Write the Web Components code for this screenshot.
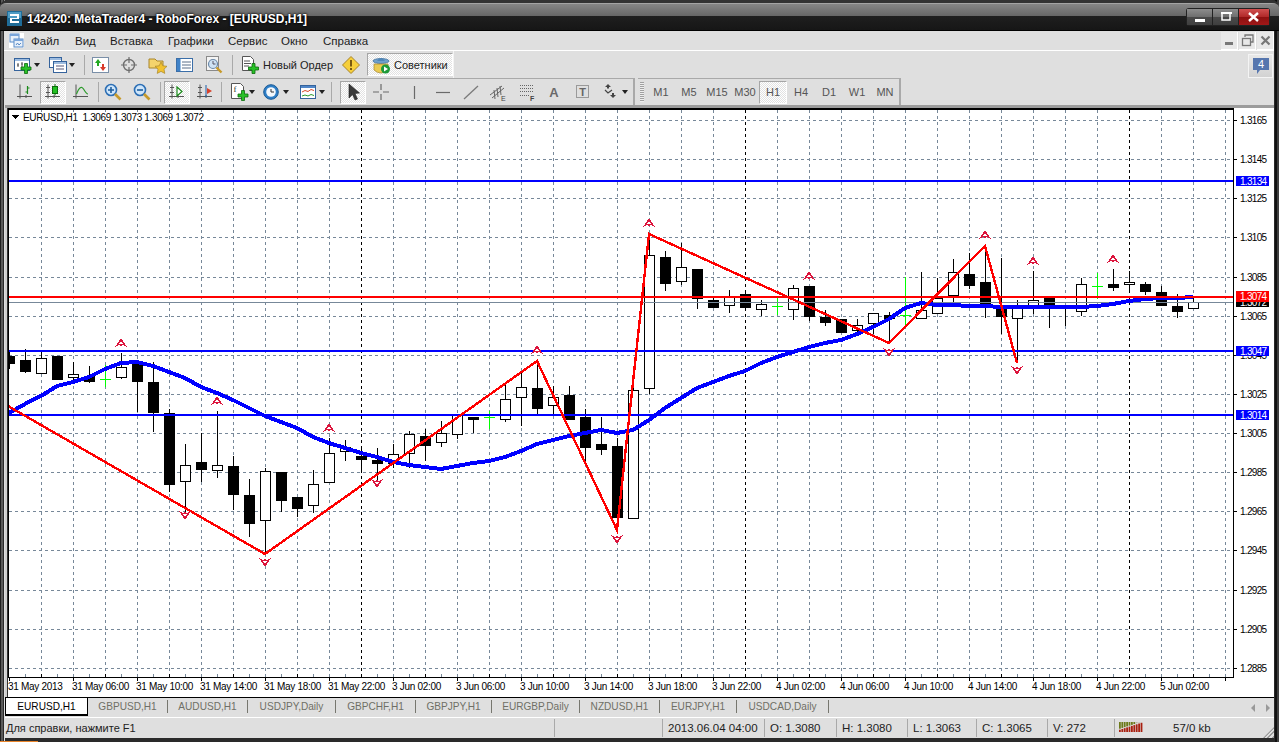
<!DOCTYPE html>
<html>
<head>
<meta charset="utf-8">
<title>MetaTrader4</title>
<style>
  html, body { margin: 0; padding: 0; background: #2a2a2a; overflow: hidden; }
</style>
</head>
<body>
<mt-window>
  <mt-titlebar title-text="142420: MetaTrader4 - RoboForex - [EURUSD,H1]"></mt-titlebar>
  <mt-menubar></mt-menubar>
  <mt-toolrow>
    <mt-toolbar edge="light">
      <tb-btn w="36" pad="6" icon="newchart" caret gap="2"></tb-btn>
      <tb-btn w="36" pad="5" icon="profiles" caret gap="2"></tb-btn>
      <tb-sep w="8"></tb-sep>
      <tb-btn w="26" icon="market"></tb-btn>
      <tb-btn w="30" icon="target"></tb-btn>
      <tb-btn w="28" icon="navigator"></tb-btn>
      <tb-btn w="26" icon="terminal"></tb-btn>
      <tb-btn w="32" icon="tester"></tb-btn>
      <tb-sep w="4"></tb-sep>
      <tb-btn w="106" pad="7" icon="order" gap="4">Новый Ордер</tb-btn>
      <tb-btn w="22" icon="alert"></tb-btn>
      <tb-btn w="5"></tb-btn>
      <tb-btn w="86" pad="4" icon="experts" gap="4" pressed>Советники</tb-btn>
    </mt-toolbar>
    <mt-notify count="4"></mt-notify>
  </mt-toolrow>
  <mt-toolrow>
    <mt-toolbar edge="gray" line>
      <tb-btn w="4"></tb-btn>
      <tb-btn w="26" icon="bars"></tb-btn>
      <tb-btn w="2"></tb-btn>
      <tb-btn w="26" icon="candles" pressed></tb-btn>
      <tb-btn w="2"></tb-btn>
      <tb-btn w="26" icon="linechart"></tb-btn>
      <tb-sep w="8"></tb-sep>
      <tb-btn w="22" icon="zoomin"></tb-btn>
      <tb-btn w="36" icon="zoomout"></tb-btn>
      <tb-sep w="1"></tb-sep>
      <tb-btn w="3"></tb-btn>
      <tb-btn w="26" icon="autoscroll" pressed></tb-btn>
      <tb-btn w="2"></tb-btn>
      <tb-btn w="26" icon="shift"></tb-btn>
      <tb-sep w="6"></tb-sep>
      <tb-btn w="38" pad="7" icon="indicators" caret gap="0"></tb-btn>
      <tb-btn w="30" pad="1" icon="clock" caret gap="2"></tb-btn>
      <tb-btn w="36" pad="8" icon="templates" caret gap="1"></tb-btn>
      <tb-sep w="6"></tb-sep>
      <tb-btn w="6"></tb-btn>
      <tb-btn w="26" icon="cursor" pressed></tb-btn>
      <tb-btn w="30" icon="cross"></tb-btn>
      <tb-btn w="36" icon="vline"></tb-btn>
      <tb-btn w="22" icon="hline"></tb-btn>
      <tb-btn w="34" icon="trend"></tb-btn>
      <tb-btn w="20" icon="channel"></tb-btn>
      <tb-btn w="38" icon="fibo"></tb-btn>
      <tb-btn w="16" icon="textA"></tb-btn>
      <tb-btn w="42" icon="label"></tb-btn>
      <tb-btn w="29" pad="0" icon="arrows" caret gap="0"></tb-btn>
    </mt-toolbar>
    <mt-toolbar edge="gray" line grip gapleft>
      <tb-btn w="28" period>M1</tb-btn>
      <tb-btn w="28" period>M5</tb-btn>
      <tb-btn w="28" period>M15</tb-btn>
      <tb-btn w="28" period>M30</tb-btn>
      <tb-btn w="28" period pressed>H1</tb-btn>
      <tb-btn w="28" period>H4</tb-btn>
      <tb-btn w="28" period>D1</tb-btn>
      <tb-btn w="28" period>W1</tb-btn>
      <tb-btn w="28" period>MN</tb-btn>
    </mt-toolbar>
  </mt-toolrow>
  <mt-chart></mt-chart>
  <mt-tabs></mt-tabs>
  <mt-statusbar></mt-statusbar>
</mt-window>

<script>
const UI_FONT = '"Liberation Sans", "DejaVu Sans", sans-serif';

// small pieces shared by the toolbar icons
const plus = (x, y) => `<path d="M${x - 1.5} ${y - 5}h3v3.5h3.5v3h-3.5v3.5h-3v-3.5h-3.5v-3h3.5z" fill="#28c028" stroke="#0b6b0b" stroke-width=".8"/>`;
const win = (x, y, w, h) => `<rect x="${x + .5}" y="${y + .5}" width="${w}" height="${h}" fill="#fff" stroke="#35639c"/><rect x="${x + 1}" y="${y + 1}" width="${w - 1}" height="2" fill="#9dbce0"/>`;
const axes = '<path d="M4 1.5v14M1 13.5h15M2 4.5h4M2 9.5h4M10 12v3" stroke="#555" stroke-width="1" fill="none"/>';
const lens = (mark) => `<circle cx="7" cy="7" r="5.5" fill="#cfe6fb" stroke="#2d6fb5" stroke-width="1.6"/><path d="M11 11l5.5 5.5" stroke="#c79a2a" stroke-width="2.6"/>${mark}`;

const ICONS = {
  newchart: win(0, 2, 15, 12) + '<path d="M4 7v4M8 6v5M3 9h2M7 8h2" stroke="#555" fill="none"/>' + plus(12, 12.5),
  profiles: win(0, 1, 12, 10) + win(4, 5, 13, 11) + '<path d="M7 10h8M7 13h8" stroke="#557" fill="none"/>',
  market: '<rect x=".5" y="1.5" width="16" height="15" fill="#fff" stroke="#7a8fa8"/><path d="M6 3l3 4h-2v3h-2v-3h-2z" fill="#22a822"/><path d="M11 15l-3-4h2v-3h2v3h2z" fill="#d83a2a"/>',
  target: '<circle cx="9" cy="9" r="5.5" fill="none" stroke="#6e6e6e" stroke-width="1.4"/><path d="M9 1v6M9 11v6M1 9h6M11 9h6" stroke="#6e6e6e" stroke-width="1.2"/>',
  navigator: '<path d="M0 3h6l2 2h6v7h-14z" fill="#f4d36c" stroke="#a8852a"/><path d="M12 6l1.8 3.8 4.2.5-3 2.9.8 4.2-3.8-2-3.8 2 .8-4.2-3-2.9 4.2-.5z" fill="#f2c230" stroke="#a8852a" stroke-width=".7"/>',
  terminal: '<rect x=".5" y="2.5" width="16" height="13" fill="#fff" stroke="#3b6ea8"/><rect x="1" y="3" width="3.5" height="12" fill="#3f82c8"/><path d="M6 6h9M6 9h9M6 12h9" stroke="#5a6f88"/>',
  tester: '<rect x="1.5" y=".5" width="12" height="14" fill="#f4f4f4" stroke="#8a8a8a"/><circle cx="8" cy="8" r="4.5" fill="#cfe3f5" stroke="#6a88a8" stroke-width="1.2"/><path d="M8 5v3h2.5" stroke="#556" fill="none"/><path d="M11.5 11.5l5 5" stroke="#c79a2a" stroke-width="2.4"/>',
  order: '<path d="M1.5 .5h8l3 3v11h-11z" fill="#fff" stroke="#555"/><path d="M3 5h6M3 7.5h7M3 10h5" stroke="#555"/>' + plus(12.5, 12.5),
  alert: '<path d="M9 .5l8.5 8.5-8.5 8.5-8.5-8.5z" fill="#f6cf3c" stroke="#a8842a"/><rect x="8" y="4" width="2" height="6.5" fill="#7a5a10"/><rect x="8" y="12" width="2" height="2" fill="#7a5a10"/>',
  experts: '<ellipse cx="9" cy="5" rx="8" ry="2.5" fill="#6ea0cc" stroke="#3a6a96" stroke-width=".7"/><path d="M5 5q4-6 8 0z" fill="#4f86b8"/><path d="M2 8h14v6q-3 3-7 3t-7-3z" fill="#eacb52" stroke="#a8852a" stroke-width=".7"/><circle cx="13.5" cy="13" r="4.5" fill="#1e9a38"/><path d="M12 10.5l4 2.5-4 2.5z" fill="#fff"/>',
  bars: axes.replace('M2 4.5h4M2 9.5h4', '') + '<path d="M11.5 3v8M9.5 9h2M11.5 5h2" stroke="#1a8a1a" fill="none" stroke-width="1.2"/>',
  candles: axes + '<rect x="8.5" y="3.5" width="5" height="7" fill="#22c022" stroke="#0b6b0b"/><path d="M11 1v2.5M11 10.5v2" stroke="#0b6b0b"/>',
  linechart: '<path d="M4 1.5v14M1 13.5h15" stroke="#555" fill="none"/><path d="M4.5 11q4-10 7-5t4.5 5" stroke="#2a9a2a" fill="none" stroke-width="1.2"/>',
  zoomin: lens('<path d="M4 7h6M7 4v6" stroke="#1f5f9f" stroke-width="1.6"/>'),
  zoomout: lens('<path d="M4 7h6" stroke="#1f5f9f" stroke-width="1.6"/>'),
  autoscroll: axes + '<path d="M9 4l5 4.5-5 4.5z" fill="#fff" stroke="#1a8a1a" stroke-width="1.2"/>',
  shift: axes + '<path d="M10 2v12" stroke="#1f5fa8"/><path d="M16 8l-5-3v6z" fill="#d8402a"/>',
  indicators: '<path d="M.5 .5h9l3 3v12h-12z" fill="#fff" stroke="#555"/><text x="2.5" y="9" font-family="Liberation Serif, serif" font-size="9" fill="#333">f</text>' + plus(12, 12.5),
  clock: '<circle cx="8" cy="9" r="7.3" fill="#2e7fc8" stroke="#1b5a94"/><circle cx="8" cy="9" r="4.8" fill="#f4f8fc"/><path d="M8 6v3h3" stroke="#333" fill="none"/>',
  templates: '<rect x=".5" y="2.5" width="15" height="13" fill="#fff" stroke="#35639c"/><rect x="1" y="3" width="14" height="2" fill="#4f86c8"/><path d="M2 9l3-1.5 3 1 3-2 3 1" stroke="#d84a2a" fill="none"/><path d="M2 13l3-1 3 1 3-1.5 3 1" stroke="#2a9a2a" fill="none"/>',
  cursor: '<path d="M5 1v14l3.5-3.5 2.5 5.500 2.500-1-2.500-5.500 4.500-.5z" fill="#3a3a3a" stroke="#222" stroke-width=".6"/>',
  cross: '<path d="M9 1v6M9 11v6M1 9h6M11 9h6" stroke="#6a6a6a" stroke-width="1.2"/>',
  vline: '<path d="M9.5 3v13" stroke="#6a6a6a" stroke-width="1.2"/>',
  hline: '<path d="M2 9.5h14" stroke="#6a6a6a" stroke-width="1.2"/>',
  trend: '<path d="M2 16L16 3" stroke="#7a7a7a" stroke-width="1.3"/>',
  channel: '<path d="M1 12L13 3M3 15L15 5M5 7l1 9M8 5l1 9M11 3l1 9" stroke="#666" stroke-width="1" fill="none"/><text x="12" y="18" font-family="Liberation Sans, sans-serif" font-size="7" fill="#444">E</text>',
  fibo: '<path d="M2 2.5h13M2 5.5h13M2 8.5h13M2 12.5h10" stroke="#666" stroke-dasharray="1 1"/><text x="12" y="18" font-family="Liberation Sans, sans-serif" font-size="7" font-weight="bold" fill="#444">F</text>',
  textA: '<text x="9" y="14" text-anchor="middle" font-family="Liberation Sans, sans-serif" font-weight="bold" font-size="13" fill="#6a6a6a">A</text>',
  label: '<rect x="2.5" y="2.5" width="12" height="12" fill="none" stroke="#555" stroke-dasharray="1 1"/><text x="8.5" y="13" text-anchor="middle" font-family="Liberation Sans, sans-serif" font-weight="bold" font-size="11" fill="#666">T</text>',
  arrows: '<path d="M4 1l3 3h-2v1.5h-2v-1.5h-2z" fill="#444"/><path d="M1 7l3 3 4-3" stroke="#444" stroke-width="1.2" fill="none"/><path d="M9 15l-3-3h6z" fill="#444"/><rect x="8" y="10" width="2" height="2" fill="#444"/>',
};

class MtWindow extends HTMLElement {
  constructor() {
    super();
    this.attachShadow({ mode: 'open' });
    this.shadowRoot.innerHTML = `
      <style>
        :host {
          display: flex;
          flex-direction: column;
          width: 1279px;
          height: 742px;
          box-sizing: border-box;
          padding: 0 5px 4px 5px;
          position: relative;
          overflow: hidden;
          font-family: ${UI_FONT};
          background: linear-gradient(90deg, #1e1e1e 0 1px, #5a5a5a 1px 3px, #2a2a2a 3px 4px, #dfdfdf 4px 5px, #2a2a2a 5px 1274px, #2a2a2a 1274px 1275px, #111 1275px 1277px, #3e3e3e 1277px);
        }
        /* taskbar edge under the window */
        :host::after { content: ""; position: absolute; left: 0; bottom: 0; width: 38px; height: 1px; background: #e8842a; }
      </style>
      <slot></slot>
    `;
  }
}

class MtTitlebar extends HTMLElement {
  constructor() {
    super();
    this.attachShadow({ mode: 'open' });
    this.shadowRoot.innerHTML = `
      <style>
        :host {
          display: flex;
          align-items: center;
          height: 31px;
          flex: none;
          box-sizing: border-box;
          margin: 0 -5px;
          padding: 3px 9px 0 7px;
          border-top: 3px solid #333;
          border-radius: 7px 7px 0 0;
          background: linear-gradient(#a4a4a4 0 1px, #868686 1px, #666 13px, #1f1f1f 13px, #161616 27px, #000 27px);
        }
        .logo { width: 15px; height: 15px; margin-right: 5px; flex: none; }
        .text {
          color: #fff;
          font: bold 12px ${UI_FONT};
          text-shadow: 0 0 3px #000, 0 0 2px #000;
          white-space: nowrap;
        }
        .btns {
          margin-left: auto;
          display: flex;
          height: 16px;
          padding: 1px;
          margin-top: -3px;
          background: #222;
          border-radius: 3px;
          gap: 1px;
        }
        .b {
          width: 25px;
          background: linear-gradient(#8d8d8d, #6e6e6e 50%, #4a4a4a 50%, #3f3f3f);
          display: flex;
          align-items: center;
          justify-content: center;
        }
        .c { width: 30px; background: linear-gradient(#d05050, #b02828 50%, #8e1010 50%, #a01818); }
        svg { display: block; }
      </style>
      <svg class="logo" viewBox="0 0 15 15">
        <rect width="15" height="15" fill="#1f6c98"/>
        <rect x="1" y="1" width="13" height="6" fill="#4f9cc4"/>
        <path d="M3 3h9v5h-7v2h7v2h-9v-5h7v-2h-7z" fill="#fff"/>
      </svg>
      <span class="text"></span>
      <div class="btns">
        <div class="b"><svg width="14" height="10"><rect x="2" y="7" width="10" height="3" fill="#fff"/></svg></div>
        <div class="b"><svg width="14" height="10"><rect x="3" y="1" width="8" height="7" fill="none" stroke="#fff" stroke-width="1.5"/><rect x="2" y="0" width="11" height="2" fill="#fff"/></svg></div>
        <div class="b c"><svg width="14" height="10"><path d="M2 1l9 8M11 1l-9 8" stroke="#fff" stroke-width="2.4"/></svg></div>
      </div>
    `;
  }

  connectedCallback() {
    this.shadowRoot.querySelector('.text').textContent = this.getAttribute('title-text');
  }
}

class MtMenubar extends HTMLElement {
  constructor() {
    super();
    this.attachShadow({ mode: 'open' });
    const items = [['Файл', 44], ['Вид', 35], ['Вставка', 58], ['Графики', 60], ['Сервис', 53], ['Окно', 42], ['Справка', 60]];
    this.shadowRoot.innerHTML = `
      <style>
        :host {
          display: flex;
          align-items: center;
          flex: none;
          height: 20px;
          box-sizing: border-box;
          background: #dfdfdf;
          border-bottom: 1px solid #fff;
          margin-left: -1px;
          padding-left: 5px;
          font-size: 11px;
          color: #1c1c1c;
        }
        .icon { width: 15px; height: 15px; margin-right: 7px; background: #fff; }
        .m { white-space: nowrap; font-size: 11.5px; }
        .mdi { margin-left: auto; display: flex; gap: 1px; height: 18px; }
        .mdi div {
          width: 17px;
          background: #e8e8e8;
          border-right: 1px solid #fff;
          border-bottom: 1px solid #fff;
          box-sizing: border-box;
          display: flex;
          align-items: center;
          justify-content: center;
        }
      </style>
      <svg class="icon" viewBox="0 0 15 15">
        <rect x="1" y="1" width="9" height="8" fill="#e8f0fa" stroke="#5b8cc8"/>
        <rect x="1" y="1" width="9" height="2" fill="#7aa5da"/>
        <rect x="5" y="6" width="9" height="8" fill="#e8f0fa" stroke="#5b8cc8"/>
        <rect x="5" y="6" width="9" height="2" fill="#7aa5da"/>
        <path d="M7 12l1.5-2 1.5 2 2-2" stroke="#5b8cc8" fill="none"/>
      </svg>
      ${items.map(([t, w]) => `<span class="m" style="width:${w}px">${t}</span>`).join('')}
      <div class="mdi">
        <div><svg width="11" height="11"><rect x="1" y="7" width="8" height="3" fill="#777"/></svg></div>
        <div><svg width="13" height="13"><path d="M4 3V1h8v7h-2" fill="none" stroke="#777" stroke-width="1.3"/><rect x="1.5" y="4.5" width="8" height="7" fill="none" stroke="#777" stroke-width="1.3"/></svg></div>
        <div><svg width="11" height="11"><path d="M1.5 1.5l8 8M9.5 1.5l-8 8" stroke="#777" stroke-width="2.2"/></svg></div>
      </div>
    `;
  }
}

class MtToolrow extends HTMLElement {
  constructor() {
    super();
    this.attachShadow({ mode: 'open' });
    this.shadowRoot.innerHTML = `
      <style>
        :host {
          display: flex;
          flex: none;
          height: 27px;
          background: #dfdfdf;
          align-items: stretch;
          margin-left: -1px;
        }
      </style>
      <slot></slot>
    `;
  }
}

class MtToolbar extends HTMLElement {
  constructor() {
    super();
    this.attachShadow({ mode: 'open' });
    this.shadowRoot.innerHTML = `
      <style>
        :host {
          display: flex;
          align-items: center;
          box-sizing: border-box;
          padding-left: 4px;
          border-right: 1px solid #f4f4f4;
          background: #dfdfdf;
        }
        :host([edge="gray"]) { border-right: 2px solid #a9a9a9; }
        :host([line]) { border-top: 1px solid #a9a9a9; }
        :host([gapleft]) { margin-left: 3px; padding-left: 0; }
        .grip {
          display: none;
          width: 4px;
          height: 20px;
          margin: 0 3px 0 2px;
          background: repeating-linear-gradient(#a0a0a0 0 1px, #eee 1px 2px);
        }
        :host([grip]) .grip { display: block; }
      </style>
      <div class="grip"></div>
      <slot></slot>
    `;
  }
}

class TbBtn extends HTMLElement {
  constructor() {
    super();
    this.attachShadow({ mode: 'open' });
    this.shadowRoot.innerHTML = `
      <style>
        :host {
          display: flex;
          flex: none;
          align-items: center;
          justify-content: center;
          box-sizing: border-box;
          height: 23px;
          font-size: 11px;
          color: #222;
          white-space: nowrap;
        }
        :host([pad]) { justify-content: flex-start; }
        :host([period]) { font-size: 11px; color: #555; }
        :host([pressed]) {
          border: 1px solid;
          border-color: #a6a6a6 #fff #fff #a6a6a6;
          background: repeating-conic-gradient(#fff 0 25%, #e2e2e2 0 50%) 0 0 / 2px 2px;
        }
        svg { display: block; flex: none; overflow: visible; }
        .caret { width: 0; height: 0; border: 3px solid transparent; border-top: 4px solid #222; border-bottom: 0; flex: none; }
      </style>
    `;
  }

  connectedCallback() {
    const root = this.shadowRoot;
    this.style.width = this.getAttribute('w') + 'px';
    if (this.hasAttribute('pad')) this.style.paddingLeft = this.getAttribute('pad') + 'px';
    const gap = this.getAttribute('gap') || 0;
    const name = this.getAttribute('icon');
    if (name) {
      const box = document.createElement('span');
      box.style.cssText = `display:block;width:18px;height:18px;margin-right:${gap}px;flex:none`;
      box.innerHTML = `<svg width="18" height="18" viewBox="0 0 18 18">${ICONS[name]}</svg>`;
      root.appendChild(box);
    }
    root.appendChild(document.createElement('slot'));
    if (this.hasAttribute('caret')) {
      const c = document.createElement('div');
      c.className = 'caret';
      root.appendChild(c);
    }
  }
}

class TbSep extends HTMLElement {
  constructor() {
    super();
    this.attachShadow({ mode: 'open' });
    this.shadowRoot.innerHTML = `
      <style>
        :host { display: flex; flex: none; justify-content: center; height: 20px; }
        div { width: 1px; background: #a9a9a9; }
      </style>
      <div></div>
    `;
  }

  connectedCallback() {
    this.style.width = this.getAttribute('w') + 'px';
  }
}

class MtNotify extends HTMLElement {
  constructor() {
    super();
    this.attachShadow({ mode: 'open' });
    this.shadowRoot.innerHTML = `
      <style>
        :host {
          display: flex;
          align-items: center;
          justify-content: center;
          box-sizing: border-box;
          position: absolute;
          right: 6px;
          top: 54px;
          width: 25px;
          height: 24px;
          background: linear-gradient(#e8e8e8, #d2d2d2);
          border: 1px solid #f4f4f4;
        }
        svg { display: block; }
      </style>
      <svg width="18" height="19" viewBox="0 0 18 19">
        <path d="M1 1h16v12h-9l-3 4v-4h-4z" fill="#5676ae"/>
        <text x="9" y="11" text-anchor="middle" font-family="Liberation Sans, sans-serif" font-size="11" fill="#fff"></text>
      </svg>
    `;
  }

  connectedCallback() {
    this.shadowRoot.querySelector('text').textContent = this.getAttribute('count');
  }
}

// chart data, pixel values taken from the screen. one entry per hour: high, low, body top, body bottom
const CANDLES = [
  ['b',350,369,356,363],['b',349,373,360,371],['w',350,373,358,373],['b',356,379,356,379],['w',362,382,374,377],
  ['b',366,383,376,381],['d',365,387,379],['w',353,379,367,377],['b',363,412,363,381],['b',362,432,382,412],
  ['b',409,492,413,484],['w',444,512,465,481],['b',433,482,462,469],['w',411,478,465,470],['b',456,510,466,494],
  ['b',479,537,495,523],['w',468,554,471,520],['b',472,512,472,500],['b',497,517,497,508],['w',470,513,484,505],
  ['w',438,483,453,482],['w',440,461,447,451],['b',446,473,456,459],['b',448,483,460,463],['w',444,468,454,463],
  ['w',431,468,434,453],['b',429,461,436,445],['w',421,447,433,442],['w',415,439,415,434],['b',417,433,417,419],
  ['d',411,429,417],['w',383,422,399,419],['w',372,426,387,397],['b',362,414,388,408],['w',386,415,397,405],
  ['b',386,420,395,419],['b',409,462,417,447],['b',417,455,444,449],['b',438,517,446,517],['w',368,518,390,518],
  ['w',233,394,255,388],['b',251,291,257,283],['w',243,285,267,281],['b',269,309,269,298],['b',297,307,300,307],
  ['w',290,313,297,305],['b',290,307,294,307],['w',300,316,304,309],['d',298,315,306],['w',285,320,288,309],
  ['b',286,321,286,316],['b',310,326,317,322],['b',319,333,319,332],['w',319,334,325,330],['w',313,334,313,323],
  ['b',312,343,315,318],['d',277,327,315],['w',272,318,310,318],['w',278,313,298,313],['w',259,303,272,295],
  ['b',253,289,274,285],['b',246,318,282,305],['b',258,334,306,316],['w',300,360,307,318],['w',271,314,300,307],
  ['b',298,328,298,306],['b',306,326,306,308],['w',278,316,284,311],['d',273,299,286],['b',269,291,284,287],
  ['w',271,292,282,284],['b',282,295,284,291],['b',286,306,292,305],['b',294,318,306,311],['w',298,308,302,308],
];
const MA = '9,413 25,404 41,396 57,386 73,382 89,377 105,369 121,363 137,362 153,366 169,372 185,378 201,387 217,393 233,400 249,408 265,416 281,422 297,428 313,437 329,443 345,448 361,453 377,457 393,462 409,465 425,467 441,469 457,466 473,463 489,461 505,457 521,451 537,444 553,440 569,436 585,433 601,430 617,433 633,430 649,420 665,408 681,398 697,388 713,382 729,376 745,371 761,363 777,357 793,352 809,347 825,343 841,340 857,334 873,327 889,319 905,308 921,303 937,305 953,305 969,306 985,306 1001,307 1017,307 1033,307 1049,307 1065,307 1081,307 1097,306 1113,304 1129,301 1145,299 1161,298 1177,298 1193,297';
const ZIGZAG = '8,406 265,554 537,361 617,530 649,234 889,343 985,246 1017,363';
const UP_ARROWS = [[121,343],[217,401],[329,428],[537,350],[649,223],[809,276],[985,235],[1033,261],[1113,259]];
const DOWN_ARROWS = [[185,515],[265,562],[377,483],[617,539],[889,352],[1017,370]];
const PRICES = ['1.3165','1.3145','1.3125','1.3105','1.3085','1.3065','1.3045','1.3025','1.3005','1.2985','1.2965','1.2945','1.2925','1.2905','1.2885'];
const TIMES = ['31 May 06:00','31 May 10:00','31 May 14:00','31 May 18:00','31 May 22:00','3 Jun 02:00','3 Jun 06:00','3 Jun 10:00','3 Jun 14:00','3 Jun 18:00','3 Jun 22:00','4 Jun 02:00','4 Jun 06:00','4 Jun 10:00','4 Jun 14:00','4 Jun 18:00','4 Jun 22:00','5 Jun 02:00'];

class MtChart extends HTMLElement {
  constructor() {
    super();
    this.attachShadow({ mode: 'open' });
    let s = '';
    const gridY = i => Math.round(120 + i * 39.13);

    // grid
    for (let i = 0; i < 15; i++) {
      s += `<path d="M9 ${gridY(i) + .5}H1233" stroke="#778899" stroke-dasharray="3 3"/>`;
    }
    for (let x = 41; x < 1233; x += 32) {
      const sep = x === 361 || x === 745 || x === 1129;
      s += `<path d="M${x + .5} 110V677" stroke="${sep ? '#000' : '#778899'}" stroke-dasharray="3 3"/>`;
    }

    // candles
    CANDLES.forEach((c, i) => {
      const x = 9 + i * 16;
      if (c[0] === 'd') {
        s += `<rect x="${x}" y="${c[1]}" width="1" height="${c[2] - c[1]}" fill="#0f0"/><rect x="${x - 5}" y="${c[3]}" width="11" height="1" fill="#0f0"/>`;
        return;
      }
      s += `<rect x="${x}" y="${c[1]}" width="1" height="${c[2] - c[1]}" fill="#000"/>`;
      if (c[0] === 'b') {
        s += `<rect x="${Math.max(x - 5, 9)}" y="${c[3]}" width="${x < 14 ? 6 : 11}" height="${c[4] - c[3] + 1}" fill="#000"/>`;
      } else {
        s += `<rect x="${x - 4.5}" y="${c[3] + .5}" width="10" height="${c[4] - c[3]}" fill="#fff" stroke="#000"/>`;
      }
    });

    // bid/ask and level lines
    s += '<rect x="9" y="302" width="1224" height="1" fill="#778899"/>';
    s += `<polyline points="${MA}" fill="none" stroke="#00f" stroke-width="4"/>`;
    for (const y of [180, 350, 414]) s += `<rect x="9" y="${y}" width="1224" height="2" fill="#00f"/>`;
    s += '<rect x="9" y="296" width="1224" height="2" fill="#f00"/>';
    s += `<polyline points="${ZIGZAG}" fill="none" stroke="#f00" stroke-width="2.4"/>`;

    // zigzag arrows
    const arrow = (x, y, d) => `<path d="M${x} ${y - 5 * d}L${x + 6} ${y + 4 * d}L${x + 1.5} ${y + 2 * d}L${x} ${y + 3 * d}L${x - 1.5} ${y + 2 * d}L${x - 6} ${y + 4 * d}z" fill="#dc143c"/><path d="M${x} ${y - 2 * d}L${x + 2} ${y + 1 * d}H${x - 2}z" fill="#fff"/>`;
    UP_ARROWS.forEach(a => { s += arrow(a[0], a[1], 1); });
    DOWN_ARROWS.forEach(a => { s += arrow(a[0], a[1], -1); });

    // header over the grid
    s += '<rect x="9" y="112" width="196" height="13" fill="#fff"/>';
    s += '<path d="M11 115h8l-4 4z" fill="#000"/>';
    s += '<text class="t" x="23" y="121">EURUSD,H1  1.3069 1.3073 1.3069 1.3072</text>';

    // frame
    s += '<rect x="5" y="108" width="2" height="589" fill="#cfcfcf"/><rect x="7" y="108" width="1" height="589" fill="#333"/>';
    s += '<rect x="8" y="108" width="1226" height="2" fill="#000"/><rect x="8" y="108" width="1" height="570" fill="#000"/><rect x="1233" y="108" width="1" height="570" fill="#000"/><rect x="8" y="677" width="1226" height="1" fill="#000"/>';

    // price axis
    PRICES.forEach((p, i) => {
      s += `<rect x="1234" y="${gridY(i)}" width="3" height="1" fill="#000"/><text class="p" x="1240" y="${gridY(i) + 4}">${p}</text>`;
    });
    const tag = (y, h, fill, label, pad) => `<rect x="1236" y="${y}" width="33" height="${h}" fill="${fill}"/><text class="p" x="1240" y="${y + pad}" style="fill:#fff">${label}</text>`;
    s += tag(297, 10, '#000', '1.3072', 9);
    s += tag(291, 11, '#f00', '1.3074', 9);
    s += tag(176, 10, '#00f', '1.3134', 9);
    s += tag(346, 10, '#00f', '1.3047', 9);
    s += tag(410, 10, '#00f', '1.3014', 9);

    // time axis
    for (let x = 9; x < 1233; x += 16) {
      s += `<rect x="${x}" y="${(x - 9) % 64 === 0 ? 677 : 674}" width="1" height="${(x - 9) % 64 === 0 ? 4 : 3}" fill="${(x - 9) % 32 === 0 ? '#000' : '#778899'}"/>`;
    }
    s += '<text class="x" x="8" y="690">31 May 2013</text>';
    TIMES.forEach((t, i) => { s += `<text class="x" x="${72 + i * 64}" y="690">${t}</text>`; });

    this.shadowRoot.innerHTML = `
      <style>
        :host {
          display: block;
          flex: none;
          height: 592px;
          box-sizing: border-box;
          border-top: 3px solid #9c9c9c;
          background: #fff;
        }
        svg { display: block; }
        text { font-family: ${UI_FONT}; fill: #000; white-space: pre; }
        .t { font-size: 10px; letter-spacing: -.35px; }
        .p { font-size: 10px; letter-spacing: -.7px; }
        .x { font-size: 10px; letter-spacing: -.3px; }
      </style>
      <svg width="1269" height="589" viewBox="5 108 1269 589" shape-rendering="crispEdges">${s}</svg>
    `;
  }
}

class MtTabs extends HTMLElement {
  constructor() {
    super();
    this.attachShadow({ mode: 'open' });
    const tabs = [['GBPUSD,H1', 80], ['AUDUSD,H1', 80], ['USDJPY,Daily', 88], ['GBPCHF,H1', 80], ['GBPJPY,H1', 76], ['EURGBP,Daily', 88], ['NZDUSD,H1', 80], ['EURJPY,H1', 77], ['USDCAD,Daily', 92]];
    this.shadowRoot.innerHTML = `
      <style>
        :host {
          display: flex;
          flex: none;
          height: 20px;
          box-sizing: border-box;
          background: #dfdfdf;
          border-top: 1px solid #000;
          font-size: 10.1px;
          color: #6f6f66;
        }
        .active {
          box-sizing: border-box;
          width: 83px;
          height: 18px;
          display: flex;
          align-items: center;
          justify-content: center;
          background: #fff;
          color: #000;
          border: 1px solid #000;
          border-top: 0;
          border-bottom-width: 2px;
        }
        .tab { display: flex; align-items: center; justify-content: center; height: 13px; margin-top: 2px; box-sizing: border-box; border-right: 1px solid #77776f; white-space: nowrap; }
        .nav { margin-left: auto; display: flex; align-items: center; gap: 11px; padding-right: 4px; }
        .nav i { display: block; width: 0; height: 0; border: 4px solid transparent; }
        .l { border-right-color: #999 !important; border-left: 0 !important; }
        .r { border-left-color: #999 !important; border-right: 0 !important; }
      </style>
      <div class="active">EURUSD,H1</div>
      ${tabs.map(([t, w]) => `<div class="tab" style="width:${w}px">${t}</div>`).join('')}
      <div class="nav"><i class="l"></i><i class="r"></i></div>
    `;
  }
}

class MtStatusbar extends HTMLElement {
  constructor() {
    super();
    this.attachShadow({ mode: 'open' });
    const cells = [['Для справки, нажмите F1', 550], ['', 108], ['2013.06.04 04:00', 102], ['O: 1.3080', 72], ['H: 1.3080', 71], ['L: 1.3063', 69], ['C: 1.3065', 71], ['V: 272', 67]];
    let bars = '';
    for (let i = 0; i < 10; i++) {
      const h = 3 + i;
      bars += `<rect x="${i * 2.4}" y="${10 - h / 1.3}" width="1.8" height="${h / 1.3}" fill="#a82010"/>`;
      bars += `<rect x="${i * 2.4}" y="0" width="1.8" height="${10 - h / 1.3 - 1}" fill="${i > 6 ? '#b8b8a8' : '#6c7a1a'}"/>`;
    }
    this.shadowRoot.innerHTML = `
      <style>
        :host {
          display: flex;
          flex: none;
          height: 21px;
          box-sizing: border-box;
          background: #dfdfdf;
          border-top: 1px solid #fff;
          font-size: 11.5px;
          color: #222;
          position: relative;
          white-space: nowrap;
        }
        .c { box-sizing: border-box; display: flex; align-items: center; padding-left: 5px; border-right: 1px solid #a9a9a9; margin: 1px 0; }
        .c:first-of-type { padding-left: 1px; font-size: 11px; }
        .bars { display: flex; align-items: center; padding-left: 4px; width: 58px; box-sizing: border-box; }
        .kb { display: flex; align-items: center; }
        .grip { position: absolute; right: 0; bottom: 0; width: 11px; height: 11px; background: repeating-linear-gradient(135deg, #dfdfdf 0 1.5px, #9a9a9a 1.5px 3px); clip-path: polygon(100% 0, 100% 100%, 0 100%); }
      </style>
      ${cells.map(([t, w]) => `<div class="c" style="width:${w}px">${t}</div>`).join('')}
      <div class="bars"><svg width="24" height="12" viewBox="0 0 24 12">${bars}</svg></div>
      <div class="kb">57/0 kb</div>
      <div class="grip"></div>
    `;
  }
}

customElements.define('mt-window', MtWindow);
customElements.define('mt-titlebar', MtTitlebar);
customElements.define('mt-menubar', MtMenubar);
customElements.define('mt-toolrow', MtToolrow);
customElements.define('mt-toolbar', MtToolbar);
customElements.define('tb-btn', TbBtn);
customElements.define('tb-sep', TbSep);
customElements.define('mt-notify', MtNotify);
customElements.define('mt-chart', MtChart);
customElements.define('mt-tabs', MtTabs);
customElements.define('mt-statusbar', MtStatusbar);
</script>
</body>
</html>
